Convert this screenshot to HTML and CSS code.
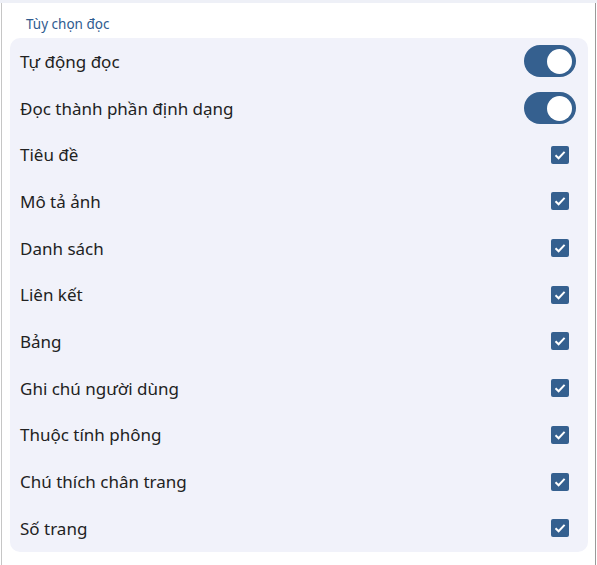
FILE: index.html
```html
<!DOCTYPE html>
<html lang="vi">
<head>
<meta charset="utf-8">
<link rel="stylesheet" href="styles.css">
</head>
<body>
<div class="topline"></div>
<div class="window">
  <div class="title">Tùy chọn đọc</div>
  <div class="panel">
    <div class="row"><span class="label">Tự động đọc</span><span class="toggle"><span class="knob"></span></span></div>
    <div class="row"><span class="label">Đọc thành phần định dạng</span><span class="toggle"><span class="knob"></span></span></div>
    <div class="row"><span class="label">Tiêu đề</span><span class="check"><svg viewBox="0 0 18 18" width="18" height="18"><path d="M4.5 9.3 L7.6 12.3 L13.6 5.9" fill="none" stroke="#fff" stroke-width="2"/></svg></span></div>
    <div class="row"><span class="label">Mô tả ảnh</span><span class="check"><svg viewBox="0 0 18 18" width="18" height="18"><path d="M4.5 9.3 L7.6 12.3 L13.6 5.9" fill="none" stroke="#fff" stroke-width="2"/></svg></span></div>
    <div class="row"><span class="label">Danh sách</span><span class="check"><svg viewBox="0 0 18 18" width="18" height="18"><path d="M4.5 9.3 L7.6 12.3 L13.6 5.9" fill="none" stroke="#fff" stroke-width="2"/></svg></span></div>
    <div class="row"><span class="label">Liên kết</span><span class="check"><svg viewBox="0 0 18 18" width="18" height="18"><path d="M4.5 9.3 L7.6 12.3 L13.6 5.9" fill="none" stroke="#fff" stroke-width="2"/></svg></span></div>
    <div class="row"><span class="label">Bảng</span><span class="check"><svg viewBox="0 0 18 18" width="18" height="18"><path d="M4.5 9.3 L7.6 12.3 L13.6 5.9" fill="none" stroke="#fff" stroke-width="2"/></svg></span></div>
    <div class="row"><span class="label">Ghi chú người dùng</span><span class="check"><svg viewBox="0 0 18 18" width="18" height="18"><path d="M4.5 9.3 L7.6 12.3 L13.6 5.9" fill="none" stroke="#fff" stroke-width="2"/></svg></span></div>
    <div class="row"><span class="label">Thuộc tính phông</span><span class="check"><svg viewBox="0 0 18 18" width="18" height="18"><path d="M4.5 9.3 L7.6 12.3 L13.6 5.9" fill="none" stroke="#fff" stroke-width="2"/></svg></span></div>
    <div class="row"><span class="label">Chú thích chân trang</span><span class="check"><svg viewBox="0 0 18 18" width="18" height="18"><path d="M4.5 9.3 L7.6 12.3 L13.6 5.9" fill="none" stroke="#fff" stroke-width="2"/></svg></span></div>
    <div class="row"><span class="label">Số trang</span><span class="check"><svg viewBox="0 0 18 18" width="18" height="18"><path d="M4.5 9.3 L7.6 12.3 L13.6 5.9" fill="none" stroke="#fff" stroke-width="2"/></svg></span></div>
  </div>
</div>
</body>
</html>
```
FILE: styles.css
```css
html, body {
  margin: 0;
  padding: 0;
  background: #ffffff;
  font-family: "Noto Sans", "Open Sans", sans-serif;
}
.topline {
  height: 3px;
  background: #eef0f7;
}
.window {
  margin-left: 1px;
  width: 595px;
  height: 562px;
  border-left: 1px solid #c6c6c6;
  border-right: 1px solid #9a9a9a;
  box-sizing: border-box;
  padding: 0 7px 0 8px;
}
.title {
  height: 35px;
  box-sizing: border-box;
  padding: 13px 0 0 16px;
  font-size: 13.5px;
  color: #2f5b8f;
  line-height: 16px;
}
.panel {
  background: #f1f2fa;
  border-radius: 10px;
  width: 578px;
  box-sizing: border-box;
  padding: 0 12px 0 10px;
}
.row {
  height: 46.7px;
  display: flex;
  align-items: center;
  justify-content: space-between;
}
.label {
  font-size: 17px;
  color: #222222;
}
.toggle {
  width: 52px;
  height: 32px;
  border-radius: 16px;
  background: #35608f;
  display: flex;
  align-items: center;
  justify-content: flex-end;
  padding-right: 4px;
  box-sizing: border-box;
}
.knob {
  width: 25px;
  height: 25px;
  border-radius: 50%;
  background: #ffffff;
}
.check {
  width: 18px;
  height: 18px;
  border-radius: 2px;
  background: #35608f;
  margin-right: 7px;
  display: block;
}
.check svg {
  display: block;
}
```
